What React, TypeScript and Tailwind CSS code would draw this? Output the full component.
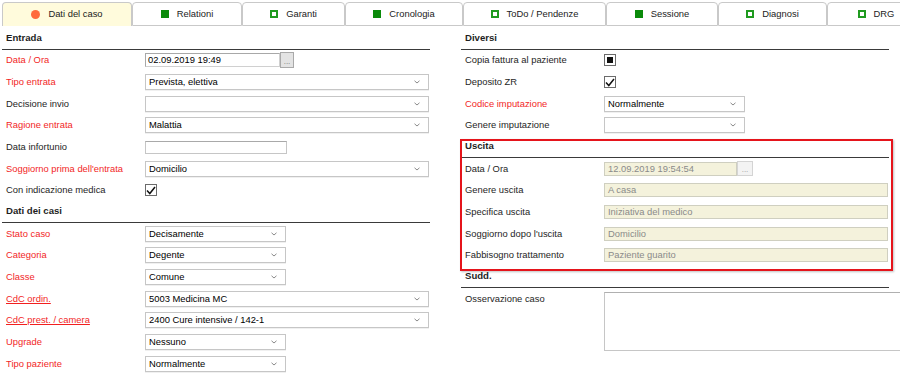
import type { ReactNode } from 'react';

type TabIcon = 'dot' | 'fill' | 'hollow';

const tabs: { label: string; icon: TabIcon; width: string; active?: boolean }[] = [
  { label: 'Dati del caso', icon: 'dot', width: 'w-[130px]', active: true },
  { label: 'Relationi', icon: 'fill', width: 'w-[110px]' },
  { label: 'Garanti', icon: 'hollow', width: 'w-[103px]' },
  { label: 'Cronologia', icon: 'fill', width: 'w-[118px]' },
  { label: 'ToDo / Pendenze', icon: 'hollow', width: 'w-[143px]' },
  { label: 'Sessione', icon: 'fill', width: 'w-[112px]' },
  { label: 'Diagnosi', icon: 'hollow', width: 'w-[109px]' },
  { label: 'DRG', icon: 'hollow', width: 'w-[98px]' },
];

function TabMark({ icon }: { icon: TabIcon }) {
  if (icon === 'dot') return <span className="h-[9px] w-[9px] rounded-full bg-[#ff6a3d]" />;
  if (icon === 'fill') return <span className="h-[8px] w-[8px] bg-[#0a8a0a]" />;
  return <span className="h-[8px] w-[8px] border-2 border-[#1f9a1f] bg-white" />;
}

function Tab({ label, icon, width, active }: { label: string; icon: TabIcon; width: string; active?: boolean }) {
  return (
    <div
      className={
        active
          ? `${width} flex h-[24px] shrink-0 items-center justify-center gap-[8px] rounded-t-[4px] border border-b-0 border-[#c9c9c9] bg-[#fffbdc]`
          : `${width} flex h-[24px] shrink-0 items-center justify-center gap-[8px] rounded-t-[4px] border border-[#c9c9c9] bg-white`
      }
    >
      <TabMark icon={icon} />
      <span className="text-[9.4px] text-[#222]">{label}</span>
    </div>
  );
}

function Header({ title }: { title: string }) {
  return (
    <div className="flex h-[21.67px] items-center border-b border-[#3a3a3a] pl-1 text-[9.6px] font-bold text-[#1e1e1e]">{title}</div>
  );
}

function Row({ label, req, link, children, top }: { label: string; req?: boolean; link?: boolean; children?: ReactNode; top?: boolean }) {
  return (
    <div className={top ? 'flex items-start pt-[4px]' : 'flex h-[21.67px] items-center'}>
      <span
        className={
          req
            ? link
              ? 'w-[143px] shrink-0 pl-1 text-[9.4px] text-[#f21f1f] underline'
              : 'w-[143px] shrink-0 pl-1 text-[9.4px] text-[#f21f1f]'
            : 'w-[143px] shrink-0 pl-1 text-[9.4px] text-[#1e1e1e]'
        }
      >
        {label}
      </span>
      {children}
    </div>
  );
}

function Chevron() {
  return (
    <svg width="6" height="4" viewBox="0 0 6 4" className="shrink-0">
      <path d="M0.5 0.8 L3 3 L5.5 0.8" fill="none" stroke="#8a8a8a" strokeWidth="1" />
    </svg>
  );
}

function Select({ value = '', wide }: { value?: string; wide?: boolean }) {
  return (
    <div
      className={
        wide
          ? 'flex h-[16px] w-[284px] items-center justify-between border border-[#c6c6c6] bg-white pr-[8px] pl-[3px] shadow-[0_1px_0_rgba(0,0,0,0.06)]'
          : 'flex h-[16px] w-[141px] items-center justify-between border border-[#c6c6c6] bg-white pr-[8px] pl-[3px] shadow-[0_1px_0_rgba(0,0,0,0.06)]'
      }
    >
      <span className="text-[9.4px] text-black">{value}</span>
      <Chevron />
    </div>
  );
}

function TextInput() {
  return <div className="h-[13px] w-[142px] border border-[#c6c6c6] border-t-[#a9a9a9] bg-white" />;
}

function DateInput({ value, readOnly }: { value: string; readOnly?: boolean }) {
  return (
    <div className="flex items-center">
      <div
        className={
          readOnly
            ? 'flex h-[14px] w-[133px] items-center border border-[#cfcfc0] bg-[#f4f2dc] pl-[3px] text-[9.4px] text-[#8a8a8a]'
            : 'flex h-[14px] w-[135px] items-center border border-[#a8a8a8] border-r-[#d0d0d0] border-b-[#d0d0d0] bg-white pl-[2px] text-[9.4px] text-black'
        }
      >
        {value}
      </div>
      <div
        className={
          readOnly
            ? 'flex h-[15px] w-[16px] items-end justify-center border border-[#d4d4d4] bg-[#f3f3f3] pb-[1px] text-[8px] leading-[8px] text-[#9a9a9a]'
            : 'flex h-[16px] w-[14px] items-end justify-center border border-[#a9a9a9] bg-[#e3e3e3] pb-[1px] text-[8px] leading-[8px] text-[#777]'
        }
      >
        ...
      </div>
    </div>
  );
}

function ReadOnly({ value }: { value: string }) {
  return (
    <div className="flex h-[14px] w-[284px] items-center border border-[#cfcfc0] bg-[#f4f2dc] pl-[3px] text-[9.4px] text-[#8a8a8a]">{value}</div>
  );
}

function Checkbox({ square }: { square?: boolean }) {
  return (
    <div className="flex h-[12px] w-[12px] items-center justify-center border border-[#6b6b6b] bg-white">
      {square ? (
        <span className="h-[6px] w-[6px] bg-[#111]" />
      ) : (
        <svg width="10" height="9" viewBox="0 0 10 9">
          <path d="M1 4.5 L3.8 7.5 L9 1" fill="none" stroke="#111" strokeWidth="1.5" />
        </svg>
      )}
    </div>
  );
}

export default function App() {
  return (
    <div className="h-[376px] w-[900px] overflow-hidden bg-white font-['Liberation_Sans',Arial,sans-serif]">
      <div className="flex h-[26px] items-end pl-[2px]">
        {tabs.map((tab) => (
          <Tab key={tab.label} {...tab} />
        ))}
      </div>

      <div className="flex gap-[31px] pt-[2px] pl-[2px]">
        <div className="w-[428px] shrink-0">
          <Header title="Entrada" />
          <Row label="Data / Ora" req>
            <DateInput value="02.09.2019 19:49" />
          </Row>
          <Row label="Tipo entrata" req>
            <Select value="Prevista, elettiva" wide />
          </Row>
          <Row label="Decisione invio">
            <Select wide />
          </Row>
          <Row label="Ragione entrata" req>
            <Select value="Malattia" wide />
          </Row>
          <Row label="Data infortunio">
            <TextInput />
          </Row>
          <Row label="Soggiorno prima dell'entrata" req>
            <Select value="Domicilio" wide />
          </Row>
          <Row label="Con indicazione medica">
            <Checkbox />
          </Row>
          <Header title="Dati dei casi" />
          <Row label="Stato caso" req>
            <Select value="Decisamente" />
          </Row>
          <Row label="Categoria" req>
            <Select value="Degente" />
          </Row>
          <Row label="Classe" req>
            <Select value="Comune" />
          </Row>
          <Row label="CdC ordin." req link>
            <Select value="5003 Medicina MC" wide />
          </Row>
          <Row label="CdC prest. / camera" req link>
            <Select value="2400 Cure intensive / 142-1" wide />
          </Row>
          <Row label="Upgrade" req>
            <Select value="Nessuno" />
          </Row>
          <Row label="Tipo paziente" req>
            <Select value="Normalmente" />
          </Row>
        </div>

        <div className="w-[428px] shrink-0">
          <Header title="Diversi" />
          <Row label="Copia fattura al paziente">
            <Checkbox square />
          </Row>
          <Row label="Deposito ZR">
            <Checkbox />
          </Row>
          <Row label="Codice imputazione" req>
            <Select value="Normalmente" />
          </Row>
          <Row label="Genere imputazione">
            <Select />
          </Row>

          <div className="relative">
            <div className="pointer-events-none absolute top-[3px] -right-[4px] -bottom-[5px] -left-[1px] z-10 border-2 border-[#e5141b] shadow-[1px_1px_2px_rgba(0,0,0,0.25)]" />
            <Header title="Uscita" />
            <Row label="Data / Ora">
              <DateInput value="12.09.2019 19:54:54" readOnly />
            </Row>
            <Row label="Genere uscita">
              <ReadOnly value="A casa" />
            </Row>
            <Row label="Specifica uscita">
              <ReadOnly value="Iniziativa del medico" />
            </Row>
            <Row label="Soggiorno dopo l'uscita">
              <ReadOnly value="Domicilio" />
            </Row>
            <Row label="Fabbisogno trattamento">
              <ReadOnly value="Paziente guarito" />
            </Row>
          </div>

          <Header title="Sudd." />
          <Row label="Osservazione caso" top>
            <div className="h-[59px] w-[320px] shrink-0 border border-[#c6c6c6] border-t-[#b0b0b0] bg-white" />
          </Row>
        </div>
      </div>
    </div>
  );
}
